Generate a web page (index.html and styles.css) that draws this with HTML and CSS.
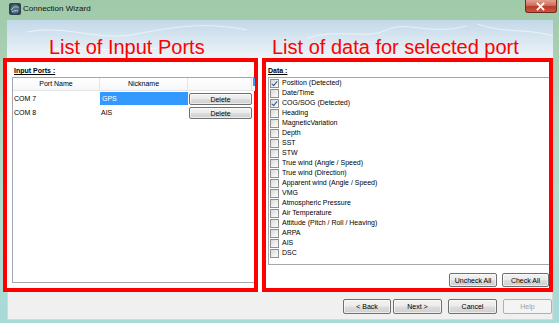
FILE: index.html
```html
<!DOCTYPE html>
<html lang="en">
<head>
    <meta charset="UTF-8">
    <title>Connection Wizard</title>
    <link rel="stylesheet" href="styles.css">
</head>
<body>

    <div class="window">

        <!-- Title bar -->
        <div class="titlebar">
            <svg class="app-icon" viewBox="0 0 12 12">
                <rect x="0" y="0" width="12" height="12" rx="2" fill="#2e4653"/>
                <circle cx="6" cy="6" r="4.5" fill="#55707f"/>
                <path d="M2.5 7 C4 4, 7 3, 9.5 4.5 M3 9 C5 8, 7 7, 9 8" stroke="#b9ccd6" stroke-width="1" fill="none"/>
            </svg>
            <span class="title">Connection Wizard</span>
            <div class="close">
                <svg viewBox="0 0 32 13" width="32" height="13">
                    <path d="M13 3.5 L19 9.5 M19 3.5 L13 9.5" stroke="#ffffff" stroke-width="2" stroke-linecap="square"/>
                </svg>
            </div>
        </div>

        <div class="client">

            <!-- Banner with the annotation titles -->
            <div class="banner">
                <span class="note note-left">List of Input Ports</span>
                <span class="note note-right">List of data for selected port</span>
            </div>

            <div class="panels">

                <!-- Input ports -->
                <section class="panel panel-ports">
                    <div class="group-label">Input Ports :</div>
                    <div class="listbox ports">
                        <div class="port-grid">
                            <div class="head">Port Name</div>
                            <div class="head">Nickname</div>
                            <div class="head"></div>
                            <div class="head head-end"><span class="mark"></span></div>

                            <div class="cell">COM 7</div>
                            <div class="cell selected">GPS</div>
                            <div class="cell"><button class="btn btn-delete">Delete</button></div>
                            <div class="cell"></div>

                            <div class="cell">COM 8</div>
                            <div class="cell">AIS</div>
                            <div class="cell"><button class="btn btn-delete">Delete</button></div>
                            <div class="cell"></div>
                        </div>
                    </div>
                </section>

                <!-- Data for selected port -->
                <section class="panel panel-data">
                    <div class="group-label">Data :</div>
                    <ul class="listbox data-list">
                        <li><span class="box checked"></span>Position (Detected)</li>
                        <li><span class="box"></span>Date/Time</li>
                        <li><span class="box checked"></span>COG/SOG (Detected)</li>
                        <li><span class="box"></span>Heading</li>
                        <li><span class="box"></span>MagneticVariation</li>
                        <li><span class="box"></span>Depth</li>
                        <li><span class="box"></span>SST</li>
                        <li><span class="box"></span>STW</li>
                        <li><span class="box"></span>True wind (Angle / Speed)</li>
                        <li><span class="box"></span>True wind (Direction)</li>
                        <li><span class="box"></span>Apparent wind (Angle / Speed)</li>
                        <li><span class="box"></span>VMG</li>
                        <li><span class="box"></span>Atmospheric Pressure</li>
                        <li><span class="box"></span>Air Temperature</li>
                        <li><span class="box"></span>Attitude (Pitch / Roll / Heaving)</li>
                        <li><span class="box"></span>ARPA</li>
                        <li><span class="box"></span>AIS</li>
                        <li><span class="box"></span>DSC</li>
                    </ul>
                    <div class="panel-buttons">
                        <button class="btn btn-uncheck">Uncheck All</button>
                        <button class="btn btn-check">Check All</button>
                    </div>
                </section>

            </div>

            <!-- Wizard buttons -->
            <div class="footer">
                <button class="btn wiz btn-back">&lt; Back</button>
                <button class="btn wiz btn-next">Next &gt;</button>
                <button class="btn wiz btn-cancel">Cancel</button>
                <button class="btn wiz btn-help" disabled>Help</button>
            </div>

        </div>
    </div>

</body>
</html>
```

FILE: styles.css
```css
/* Reset */
* {
    margin: 0;
    padding: 0;
    box-sizing: border-box;
}

body {
    width: 559px;
    height: 323px;
    overflow: hidden;
    font-family: 'Liberation Sans', Arial, sans-serif;
    font-size: 7px;
    color: #000000;
}

/* Aero window frame */
.window {
    width: 559px;
    height: 323px;
    display: flex;
    flex-direction: column;
    background: linear-gradient(180deg, #9fc9a8 0%, #b2d8c0 35%, #b0dccf 70%, #a6dad9 100%);
}

.titlebar {
    height: 20px;
    display: flex;
    align-items: flex-start;
}

.app-icon {
    width: 12px;
    height: 12px;
    margin: 3px 0 0 9px;
}

.title {
    font-size: 8px;
    line-height: 10px;
    margin: 4px 0 0 2px;
    color: #111111;
}

.close {
    margin-left: auto;
    margin-right: 2px;
    width: 32px;
    height: 13px;
    border: 1px solid #6e2a22;
    border-top: none;
    border-radius: 0 0 3px 3px;
    background: linear-gradient(180deg, #e4a08f 0%, #d0705c 45%, #bb3b28 55%, #c9583f 100%);
    display: flex;
}

.close svg {
    margin-left: -1px;
}

/* Client area */
.client {
    flex: 1;
    margin: 0 6px 0 3px;
    display: flex;
    flex-direction: column;
}

.banner {
    height: 38px;
    margin-left: 4px;
    display: grid;
    grid-template-columns: 251px 1fr;
    background:
        url("data:image/svg+xml,%3Csvg xmlns='http://www.w3.org/2000/svg' width='546' height='38'%3E%3Cpath d='M20 12 C60 4 90 22 130 14 S200 2 240 10 M300 18 C330 8 360 20 380 10 S420 16 460 6 M40 30 C80 24 100 34 150 28 M470 4 C500 14 520 8 546 16' stroke='%23ffffff' stroke-opacity='0.55' fill='none'/%3E%3C/svg%3E"),
        linear-gradient(180deg, #c3d8e8 0%, #d6e5f0 45%, #eef4f9 100%);
}

.note {
    color: #ff0000;
    font-size: 20px;
    line-height: 22px;
    padding-top: 16px;
    white-space: nowrap;
}

.note-left {
    padding-left: 42px;
}

.note-right {
    padding-left: 14px;
}

.panels {
    height: 234px;
    display: flex;
    gap: 4px;
    background: #ffffff;
}

/* Red annotation boxes */
.panel {
    border: 4px solid #ff0000;
    display: flex;
    flex-direction: column;
    background: #ffffff;
}

.panel-ports {
    width: 255px;
    padding: 3px 0 5px 5px;
}

.panel-data {
    width: 291px;
    padding: 3px 0 0 1px;
}

.group-label {
    font-weight: bold;
    text-decoration: underline;
    line-height: 11px;
    margin: 0 0 1px 2px;
}

.panel-data .group-label {
    margin-left: 1px;
}

.listbox {
    border: 1px solid #a3a8ae;
    border-right: none;
    background: #ffffff;
}

/* Port list */
.ports {
    flex: 1;
}

.port-grid {
    display: grid;
    grid-template-columns: 87px 88px 64px 1fr;
    grid-auto-rows: 14px;
}

.port-grid .head {
    height: 13px;
    line-height: 12px;
    text-align: center;
    border-right: 1px solid #e3e5e8;
    border-bottom: 1px solid #e3e5e8;
    background: linear-gradient(180deg, #ffffff, #f6f7f9);
}

.port-grid .head-end {
    border-right: none;
}

.mark {
    display: block;
    width: 2px;
    height: 8px;
    margin-left: 1px;
    background: #3399ff;
}

.port-grid .cell {
    height: 14px;
    line-height: 14px;
    padding-left: 1px;
}

.port-grid .selected {
    background: #3399ff;
    color: #ffffff;
    padding-left: 2px;
    height: 13px;
    line-height: 13px;
}

/* Buttons */
.btn {
    font-family: 'Liberation Sans', Arial, sans-serif;
    font-size: 7px;
    color: #000000;
    border: 1px solid #707070;
    border-radius: 2px;
    background: linear-gradient(180deg, #f3f3f3 0%, #ebebeb 48%, #dddddd 52%, #cfcfcf 100%);
    box-shadow: inset 0 0 0 1px rgba(255, 255, 255, 0.6);
}

.btn-delete {
    display: block;
    width: 63px;
    height: 12px;
    margin-top: 1px;
}

.data-list {
    list-style: none;
    height: 188px;
    margin-left: 1px;
    padding-left: 1px;
}

.data-list li {
    height: 10px;
    line-height: 10px;
    display: flex;
    align-items: center;
    white-space: nowrap;
}

.box {
    position: relative;
    width: 9px;
    height: 9px;
    margin-right: 3px;
    border: 1px solid #8e8f8f;
    background: linear-gradient(135deg, #d8d8d8 0%, #f0f0f0 60%, #fbfbfb 100%);
}

.box.checked::after {
    content: "";
    position: absolute;
    left: 2px;
    top: 0;
    width: 2px;
    height: 5px;
    border: solid #34518d;
    border-width: 0 1.5px 1.5px 0;
    transform: rotate(40deg);
}

.panel-buttons {
    display: flex;
    justify-content: flex-end;
    gap: 5px;
    margin-top: 8px;
}

.btn-uncheck {
    width: 48px;
    height: 14px;
}

.btn-check {
    width: 47px;
    height: 14px;
}

/* Wizard footer */
.footer {
    height: 28px;
    margin-left: 4px;
    padding-top: 7px;
    display: flex;
    justify-content: flex-end;
    align-items: flex-start;
    background: #f0f0f0;
    border: 1px solid #d6d9dc;
    border-top: none;
}

.wiz {
    width: 49px;
    height: 15px;
}

.btn-back {
    width: 48px;
    margin-right: 2px;
}

.btn-next,
.btn-cancel {
    margin-right: 6px;
}

.btn-help {
    color: #a0a0a0;
    border-color: #adb2b5;
    background: #f4f4f4;
    box-shadow: none;
}
```
